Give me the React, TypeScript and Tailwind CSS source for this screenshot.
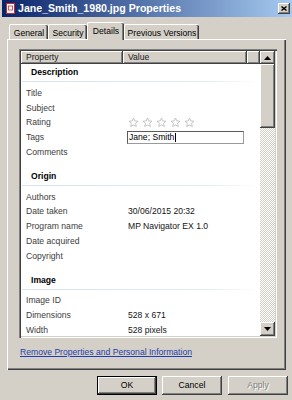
import React from 'react';

type Row = { label: string; value?: string; kind?: 'stars' | 'input' };
type Section = { title: string; first?: boolean; rows: Row[] };

const sections: Section[] = [
  {
    title: 'Description',
    first: true,
    rows: [
      { label: 'Title' },
      { label: 'Subject' },
      { label: 'Rating', kind: 'stars' },
      { label: 'Tags', kind: 'input' },
      { label: 'Comments' },
    ],
  },
  {
    title: 'Origin',
    rows: [
      { label: 'Authors' },
      { label: 'Date taken', value: '30/06/2015 20:32' },
      { label: 'Program name', value: 'MP Navigator EX 1.0' },
      { label: 'Date acquired' },
      { label: 'Copyright' },
    ],
  },
  {
    title: 'Image',
    rows: [
      { label: 'Image ID' },
      { label: 'Dimensions', value: '528 x 671' },
      { label: 'Width', value: '528 pixels' },
    ],
  },
];

function Star() {
  return (
    <svg width="11" height="11" viewBox="0 0 24 24" className="shrink-0">
      <path
        d="M12 2.2l2.9 6.4 6.9.7-5.2 4.7 1.5 6.8L12 17.3l-6.1 3.5 1.5-6.8-5.2-4.7 6.9-.7z"
        fill="#ffffff"
        stroke="#b4b4b4"
        strokeWidth="1.7"
        strokeLinejoin="round"
      />
    </svg>
  );
}

function Arrow({ up }: { up?: boolean }) {
  return (
    <svg width="7" height="4" viewBox="0 0 7 4">
      {up ? <path d="M3.5 0L7 4H0z" fill="#000" /> : <path d="M0 0h7L3.5 4z" fill="#000" />}
    </svg>
  );
}

export default function App() {
  return (
    <div className="w-[292px] h-[400px] overflow-hidden bg-[#d4d0c8] font-['Liberation_Sans',Arial,sans-serif] text-black select-none">
      {/* Title bar */}
      <div className="ml-[2px] h-[17px] flex items-center bg-[linear-gradient(to_right,#0a246a,#a6caf0)]">
        <svg width="9" height="11" viewBox="0 0 9 11" className="ml-[4px] shrink-0">
          <rect x="0.5" y="0.5" width="8" height="10" fill="#ffffff" stroke="#c42b2b" />
          <rect x="2" y="2.5" width="5" height="5" fill="#e05050" />
          <rect x="3" y="3.5" width="3" height="3" fill="#ffffff" />
        </svg>
        <span className="ml-[3px] text-white font-bold text-[10.6px] leading-none whitespace-nowrap">
          Jane_Smith_1980.jpg Properties
        </span>
        <div className="ml-auto mr-[2px] w-[12px] h-[11px] flex items-center justify-center bg-[#d4d0c8] shadow-[inset_-1px_-1px_0_#404040,inset_1px_1px_0_#ffffff,inset_-2px_-2px_0_#808080]">
          <svg width="6" height="5" viewBox="0 0 6 5">
            <path d="M0.5 0.5L5.5 4.5M5.5 0.5L0.5 4.5" stroke="#000" strokeWidth="1.4" />
          </svg>
        </div>
      </div>

      {/* Tabs */}
      <div className="mt-[5px] h-[17px] flex items-end pl-[9px] text-[8.6px]">
        <div className="w-[39px] h-[15px] flex items-center justify-center pt-[2px] border-l border-t border-white rounded-tl-[2px] rounded-tr-[2px] shadow-[inset_-1px_0_0_#404040,inset_-2px_0_0_#808080]">
          General
        </div>
        <div className="w-[39px] h-[15px] flex items-center justify-center pt-[2px] border-l border-t border-white rounded-tl-[2px] rounded-tr-[2px] shadow-[inset_-1px_0_0_#404040,inset_-2px_0_0_#808080]">
          Security
        </div>
        <div className="relative z-10 w-[37px] h-[18px] -mb-[1px] bg-[#d4d0c8] flex items-center justify-center pb-[1px] border-l border-t border-white rounded-tl-[2px] rounded-tr-[2px] shadow-[inset_-1px_0_0_#404040,inset_-2px_0_0_#808080]">
          Details
        </div>
        <div className="w-[75px] h-[15px] flex items-center justify-center pt-[2px] border-l border-t border-white rounded-tl-[2px] rounded-tr-[2px] shadow-[inset_-1px_0_0_#404040,inset_-2px_0_0_#808080]">
          Previous Versions
        </div>
      </div>

      {/* Panel */}
      <div className="ml-[7px] w-[279px] h-[331px] bg-[#d4d0c8] pt-[10px] pl-[12px] shadow-[inset_1px_1px_0_#ffffff,inset_-1px_-1px_0_#404040,inset_-2px_-2px_0_#808080]">
        <div className="w-[258px] h-[289px] p-[2px] bg-white flex shadow-[inset_1px_1px_0_#808080,inset_2px_2px_0_#404040,inset_-1px_-1px_0_#ffffff,inset_-2px_-2px_0_#d4d0c8]">
          {/* List view */}
          <div className="w-[239px] h-full overflow-hidden flex flex-col">
            <div className="h-[13px] shrink-0 flex text-[8.6px] text-[#1a1a1a]">
              <div className="w-[102px] h-full flex items-center pl-[5px] bg-[#d4d0c8] shadow-[inset_-1px_-1px_0_#404040,inset_1px_1px_0_#ffffff,inset_-2px_-2px_0_#808080]">
                Property
              </div>
              <div className="w-[124px] h-full flex items-center pl-[5px] bg-[#d4d0c8] shadow-[inset_-1px_-1px_0_#404040,inset_1px_1px_0_#ffffff,inset_-2px_-2px_0_#808080]">
                Value
              </div>
              <div className="flex-1 h-full bg-[#d4d0c8] shadow-[inset_-1px_-1px_0_#404040,inset_1px_1px_0_#ffffff,inset_-2px_-2px_0_#808080]" />
            </div>
            <div className="flex-1 overflow-hidden">
              {sections.map((s) => (
                <div key={s.title}>
                  <div className={s.first ? 'h-[21.5px] pt-[3px]' : 'h-[30px] pt-[11.75px]'}>
                    <div className="pl-[10px] h-[10px] leading-[10px] text-[8.6px] font-bold text-black">{s.title}</div>
                    <div className="mt-[4px] ml-[1px] w-[236px] h-[1px] bg-[linear-gradient(to_right,#d7e3f0,#e4ecf5_80%,#ffffff)]" />
                  </div>
                  {s.rows.map((r) => (
                    <div key={r.label} className="h-[14.75px] flex items-center text-[8.6px] leading-[10px]">
                      <div className="w-[102px] shrink-0 pl-[5px] text-[#3c3c3c] whitespace-nowrap">{r.label}</div>
                      <div className="flex-1 pl-[5px] text-[#151515] whitespace-nowrap flex items-center">
                        {r.kind === 'stars' ? (
                          <div className="flex gap-[3px]">
                            <Star />
                            <Star />
                            <Star />
                            <Star />
                            <Star />
                          </div>
                        ) : r.kind === 'input' ? (
                          <div className="-ml-[1px] w-[117px] h-[13px] flex items-center pl-[1px] border border-[#5a5a5a] border-r-[#9a9a9a] border-b-[#9a9a9a] bg-white text-black">
                            <span>Jane; Smith</span>
                            <span className="ml-[1px] w-[1px] h-[9px] bg-black" />
                          </div>
                        ) : (
                          r.value
                        )}
                      </div>
                    </div>
                  ))}
                </div>
              ))}
            </div>
          </div>
          {/* Scrollbar */}
          <div className="w-[15px] h-full flex flex-col">
            <div className="h-[13px] shrink-0 flex items-center justify-center bg-[#d4d0c8] shadow-[inset_-1px_-1px_0_#404040,inset_1px_1px_0_#ffffff,inset_-2px_-2px_0_#808080]">
              <Arrow up />
            </div>
            <div className="h-[64px] shrink-0 bg-[#d4d0c8] shadow-[inset_-1px_-1px_0_#404040,inset_1px_1px_0_#ffffff,inset_-2px_-2px_0_#808080]" />
            <div className="flex-1 bg-[image:repeating-conic-gradient(#d4d0c8_0%_25%,#ffffff_0%_50%)] bg-[length:2px_2px]" />
            <div className="h-[14px] shrink-0 flex items-center justify-center bg-[#d4d0c8] shadow-[inset_-1px_-1px_0_#404040,inset_1px_1px_0_#ffffff,inset_-2px_-2px_0_#808080]">
              <Arrow />
            </div>
          </div>
        </div>
        <div className="mt-[9px] ml-[1px] text-[8.6px] leading-[10px] text-[#1f3fae] underline whitespace-nowrap">
          Remove Properties and Personal Information
        </div>
      </div>

      {/* Buttons */}
      <div className="mt-[6px] flex h-[19px] text-[8.6px]">
        <div className="ml-[97px] w-[60px] h-full border border-black bg-[#d4d0c8] flex items-center justify-center shadow-[inset_-1px_-1px_0_#404040,inset_1px_1px_0_#ffffff,inset_-2px_-2px_0_#808080]">
          OK
        </div>
        <div className="ml-[5px] w-[60px] h-full bg-[#d4d0c8] flex items-center justify-center shadow-[inset_-1px_-1px_0_#404040,inset_1px_1px_0_#ffffff,inset_-2px_-2px_0_#808080]">
          Cancel
        </div>
        <div className="ml-[6px] w-[60px] h-full bg-[#d4d0c8] flex items-center justify-center text-[#808080] [text-shadow:1px_1px_0_#ffffff] shadow-[inset_-1px_-1px_0_#404040,inset_1px_1px_0_#ffffff,inset_-2px_-2px_0_#808080]">
          Apply
        </div>
      </div>
    </div>
  );
}
